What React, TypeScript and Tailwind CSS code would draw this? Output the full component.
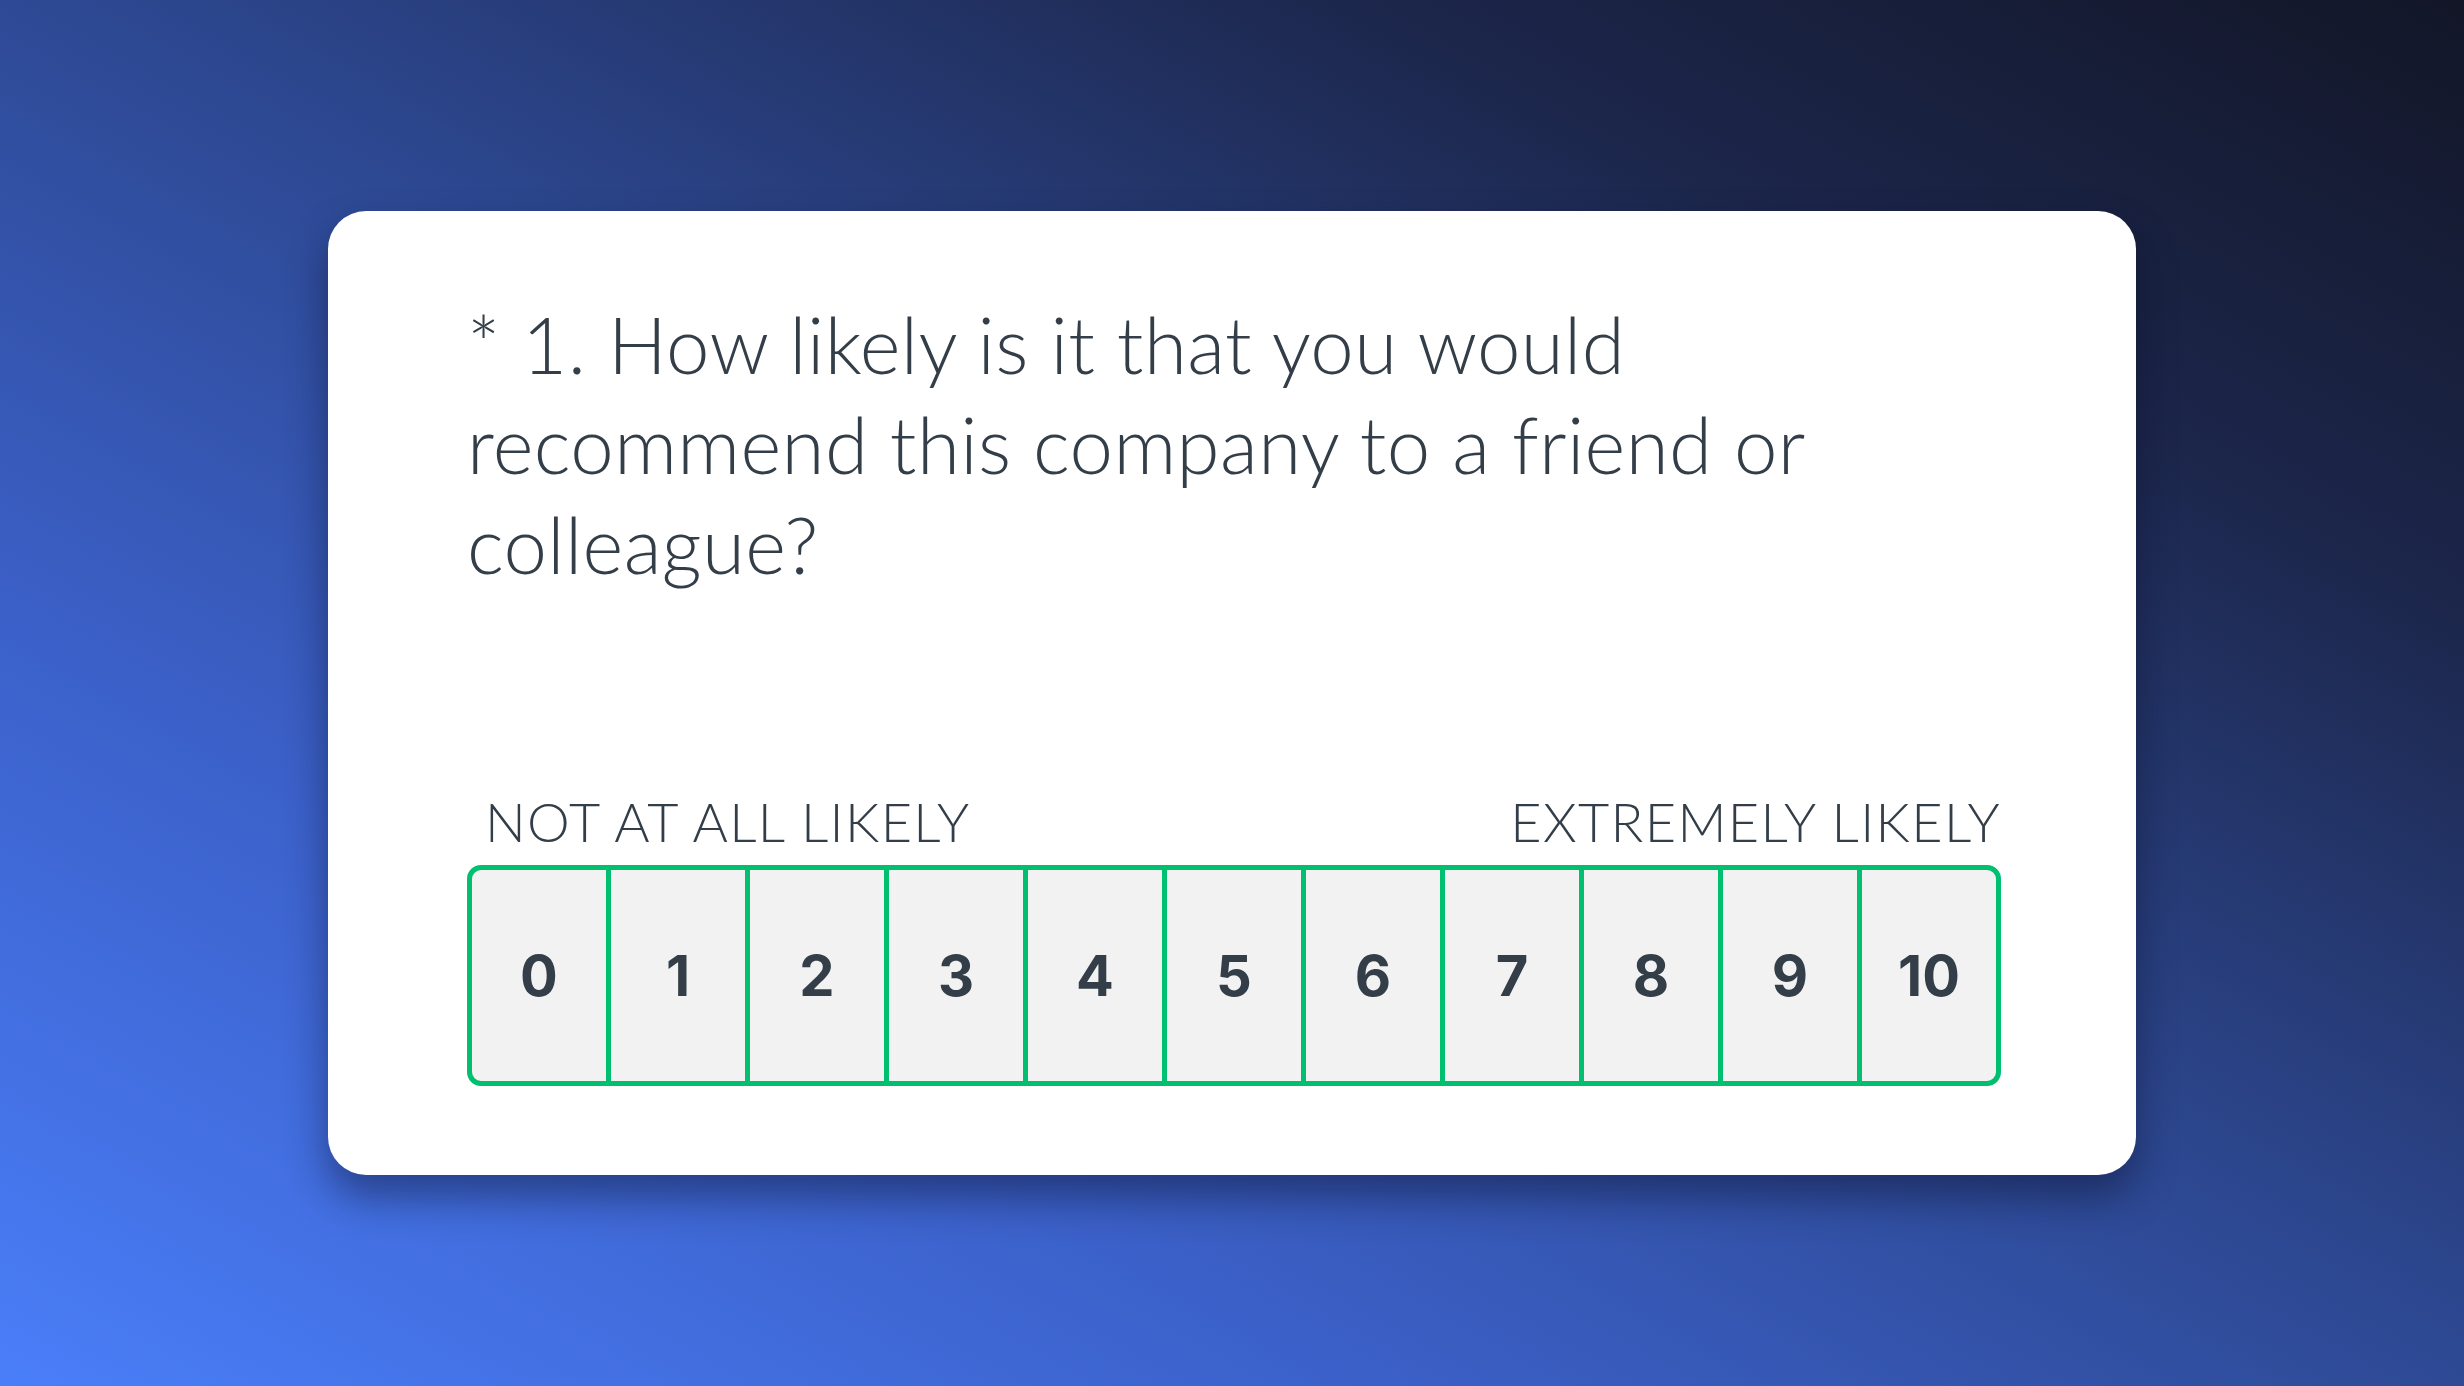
const scores = [0, 1, 2, 3, 4, 5, 6, 7, 8, 9, 10];

export default function App() {
  return (
    <div className="w-full h-screen flex items-center justify-center bg-[linear-gradient(to_top_right,#4a7ef9_0%,#3b60c8_28%,#2d4891_52%,#1c264b_78%,#121627_100%)]">
      <div className="w-[1808px] bg-white rounded-[38px] shadow-[0_22px_40px_rgba(8,14,40,0.45)] pl-[139px] pr-[135px] pt-[83px] pb-[89px]">
        <h1 className="max-w-[1460px] text-[#333e48] text-[78px] leading-[100px] tracking-[0.005em] font-light font-['Lato',sans-serif]">
          * 1. How likely is it that you would recommend this company to a friend or colleague?
        </h1>

        <div className="mt-[198px]">
          <div className="flex justify-between items-end pl-[18px] text-[#333e48] text-[54px] leading-[60px] tracking-[0.025em] font-light font-['Lato',sans-serif]">
            <span>NOT AT ALL LIKELY</span>
            <span>EXTREMELY LIKELY</span>
          </div>

          <div className="mt-[13px] flex h-[221px] border-[5px] border-[#00bf6f] rounded-[14px] overflow-hidden bg-[#f2f2f2]">
            {scores.map((n) => (
              <div
                key={n}
                className="flex-1 flex items-center justify-center border-l-[5px] border-[#00bf6f] first:border-l-0 text-[#333e48] text-[56px] font-bold font-['Inter',sans-serif]"
              >
                {n}
              </div>
            ))}
          </div>
        </div>
      </div>
    </div>
  );
}
